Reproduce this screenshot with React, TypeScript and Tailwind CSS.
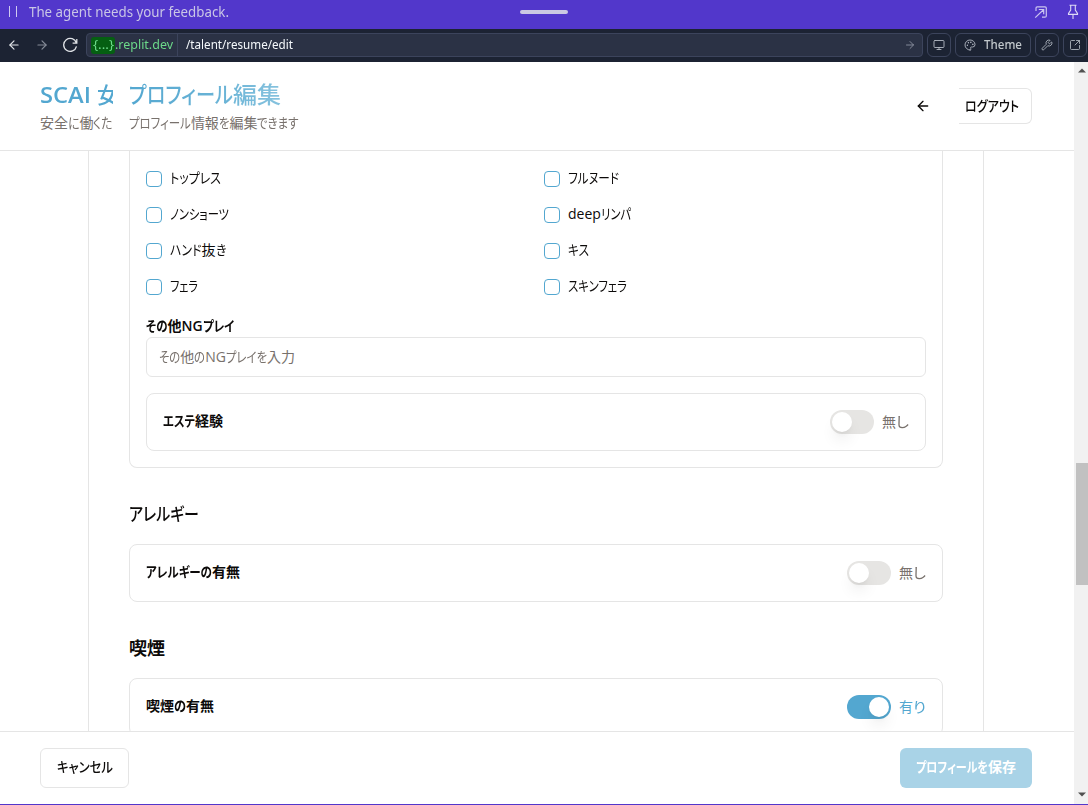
import React, { useLayoutEffect, useRef } from "react";
import { ArrowLeft, ArrowRight, Monitor, Palette, Wrench, SquareArrowOutUpRight } from "lucide-react";

const KANA = /[\u3040-\u30ff]+|[^\u3040-\u30ff]+/g;
const isKana = (s: string) => /[\u3040-\u30ff]/.test(s);

/** Sets a text in a given width by condensing its kana (or all of it, when it has none). */
function Fit({ text, w, className = "", leaf = "" }: { text: string; w: number; className?: string; leaf?: string }) {
  const ref = useRef<HTMLSpanElement>(null);
  const runs = text.match(KANA) ?? [];
  const hasKana = isKana(text);
  useLayoutEffect(() => {
    const root = ref.current;
    if (!root) return;
    const spans = Array.from(root.children) as HTMLElement[];
    let fixed = 0;
    let flexible = 0;
    spans.forEach((s) => {
      const n = (s.firstElementChild as HTMLElement).getBoundingClientRect().width;
      s.dataset.n = String(n);
      if (s.dataset.flex === "1") flexible += n;
      else fixed += n;
    });
    const k = (w - fixed) / flexible;
    spans.forEach((s) => {
      if (s.dataset.flex !== "1") return;
      s.style.width = Number(s.dataset.n) * k + "px";
      (s.firstElementChild as HTMLElement).style.transform = `scaleX(${k})`;
    });
  }, [text, w]);
  return (
    <span ref={ref} className={"inline-flex whitespace-pre " + className}>
      {runs.map((r, i) => (
        <span key={i} data-flex={!hasKana || isKana(r) ? "1" : "0"} className="inline-block shrink-0">
          <span className={"inline-block origin-left [font-feature-settings:'palt'] " + leaf}>{r}</span>
        </span>
      ))}
    </span>
  );
}

const left: [string, number][] = [["トップレス", 51], ["ノンショーツ", 59], ["ハンド抜き", 56], ["フェラ", 28]];
const right: [string, number][] = [["フルヌード", 51], ["deepリンパ", 63], ["キス", 21], ["スキンフェラ", 59]];

function Column({ items }: { items: [string, number][] }) {
  return (
    <div className="flex flex-col gap-4">
      {items.map(([t, w]) => (
        <div key={t} className="flex h-5 items-center gap-2">
          <span className="size-4 rounded-[4px] border border-[#53a7d0]" />
          <Fit text={t} w={w} className="pb-0.5 text-sm leading-5" />
        </div>
      ))}
    </div>
  );
}

function ToggleRow({ label, w, on = false }: { label: string; w: number; on?: boolean }) {
  return (
    <div className="flex h-[58px] items-center justify-between rounded-lg border border-[#e5e5e5] px-4">
      <Fit text={label} w={w} className="pb-0.5 text-sm font-semibold leading-5" />
      <div className="flex items-center gap-2">
        <span className={"flex h-6 w-11 items-center rounded-full p-0.5 " + (on ? "justify-end bg-[#53a7d0]" : "bg-[#e6e5e3]")}>
          <span className="size-5 rounded-full bg-white shadow-lg" />
        </span>
        <Fit text={on ? "有り" : "無し"} w={27} className={"text-sm leading-5 " + (on ? "text-[#53a7d0]" : "text-[#78716c]")} />
      </div>
    </div>
  );
}

function Browser() {
  return (
    <>
      <div className="flex h-[29px] shrink-0 items-center bg-[#5237cb] pb-1.5 text-[#c9c6e6]">
        <div className="ml-[9px] flex h-[11px] w-2 justify-between">
          <span className="w-px bg-[#d0caf0]" />
          <span className="w-px bg-[#d0caf0]" />
        </div>
        <Fit text="The agent needs your feedback." w={200} className="ml-3 font-['Noto_Sans',sans-serif] text-[13.5px] leading-5" />
        <span className="ml-[291px] h-1 w-12 rounded-full bg-[#cbc8e3]" />
        <svg className="ml-[466px] size-[14px]" viewBox="0 0 14 14" fill="none" stroke="#cbc5f0" strokeWidth="1.2">
          <path d="M2 6V3Q2 1.8 3.2 1.8H11Q12.3 1.8 12.3 3V11Q12.3 12.2 11 12.2H8M1.2 12.6L9.5 4.7M4.8 4.5H9.7V9.2" />
        </svg>
        <svg className="ml-[19px] h-4 w-3" viewBox="0 0 12 16" fill="none" stroke="#dedaf5" strokeWidth="1.1">
          <path d="M2.5 1.2H9.5M3.7 1.2V6L1.5 9.5V10.4H10.5V9.5L8.3 6V1.2M6 10.4V15" />
        </svg>
      </div>
      <div className="flex h-[33px] shrink-0 items-center overflow-hidden bg-[#1c2333] pb-px text-[#b4bac4]">
        <ArrowLeft className="ml-[7px] size-[14px] shrink-0 text-[#e1e4e8]" strokeWidth={2} />
        <ArrowRight className="ml-[14px] size-[14px] shrink-0 text-[#858b98]" strokeWidth={2} />
        <svg className="ml-[13px] size-4 shrink-0" viewBox="0 0 16 16" fill="none" stroke="#dfe2e6" strokeWidth="1.3">
          <path d="M14.8 2V6.2H10.6M14.4 6A6.5 6.5 0 1 0 14.5 9.4" />
        </svg>
        <div className="ml-2 flex h-6 w-[837px] shrink-0 items-center rounded-[4px] border border-[#3c445c] bg-[#2b3245] font-['Noto_Sans',sans-serif] text-[12.5px] leading-4">
          <span className="ml-1 flex h-[17px] w-6 items-center justify-center rounded-[3px] bg-[#055f12] text-[#6cd98a]">
            <Fit text="{...}" w={21} className="pb-px" />
          </span>
          <Fit text=".replit.dev" w={58} className="pb-px text-[#6cd98a]" />
          <span className="ml-1 h-[22px] w-px bg-[#3c445c]" />
          <Fit text="/talent/resume/edit" w={107} className="ml-2 pb-px text-[#f5f9fc]" />
          <ArrowRight className="mr-1.5 ml-auto size-3 text-[#8d93a1]" strokeWidth={1.8} />
        </div>
        <span className="ml-1 flex h-6 w-6 shrink-0 items-center justify-center rounded-md border border-[#3c445c]">
          <Monitor className="size-3" strokeWidth={1.8} />
        </span>
        <span className="ml-1 flex h-6 w-[76px] shrink-0 items-center rounded-md border border-[#3c445c] pl-2">
          <Palette className="size-3" strokeWidth={1.8} />
          <Fit text="Theme" w={38} className="ml-2 pb-px font-['Noto_Sans',sans-serif] text-[12.5px] font-medium leading-4 text-[#c2c8cc]" />
        </span>
        <span className="ml-1 flex h-6 w-6 shrink-0 items-center justify-center rounded-md border border-[#3c445c]">
          <Wrench className="size-3" strokeWidth={1.7} />
        </span>
        <span className="ml-1 flex h-6 w-6 shrink-0 items-center justify-center rounded-md border border-[#3c445c]">
          <SquareArrowOutUpRight className="size-3" strokeWidth={1.7} />
        </span>
      </div>
    </>
  );
}

export default function App() {
  return (
    <div className="flex h-[805px] w-[1088px] flex-col overflow-hidden bg-white font-['Open_Sans','Noto_Sans_CJK_JP',sans-serif] text-[#0c0a09]">
      <Browser />
      <div className="flex h-[742px] shrink-0">
        <div className="flex w-[1074px] flex-col">
          <header className="flex h-[89px] shrink-0 items-start border-b border-[#e5e5e5] pl-10">
            <div className="mt-4 w-[73px] overflow-hidden text-[#53a7d0]">
              <div className="flex h-8 items-center gap-1.5 text-[22px] leading-8">
                <Fit text="SCAI" w={51} className="font-semibold" />
                <Fit text="女" w={21} className="shrink-0 font-medium" />
              </div>
              <Fit text="安全に働くた" w={73} className="h-5 text-sm leading-5 text-[#78716c]" />
            </div>
            <div className="mt-4 ml-4">
              <div className="flex h-8 items-center text-[23px] font-medium leading-8">
                <Fit text="プロフィール" w={104} leaf="bg-linear-to-r from-[#53a7d0] to-[#6db5d7] bg-clip-text text-transparent" />
                <Fit text="編集" w={48} leaf="bg-linear-to-r from-[#70b7d8] to-[#86c2de] bg-clip-text text-transparent" />
              </div>
              <Fit text="プロフィール情報を編集できます" w={170} className="h-5 text-sm leading-5 text-[#78716c]" />
            </div>
            <ArrowLeft className="mt-9 ml-[616px] size-4" strokeWidth={2} />
            <div className="mt-[26px] ml-7 flex h-9 w-[73px] items-center rounded-r-md border border-l-0 border-[#e5e5e5] pl-1.5">
              <Fit text="ログアウト" w={54} className="text-sm font-medium leading-5" />
            </div>
          </header>

          <main className="h-[580px] shrink-0 overflow-hidden pl-[88px]">
            <div className="h-[640px] w-[896px] border-x border-[#e5e5e5] px-10">
              <section className="h-[317px] rounded-b-lg border border-t-0 border-[#e5e5e5] px-4 pt-[18px]">
                <div className="grid grid-cols-2 gap-x-4">
                  <Column items={left} />
                  <Column items={right} />
                </div>
                <div className="mt-[18px] mb-px flex h-[21px] items-center">
                  <Fit text="その他NGプレイ" w={88} className="text-sm font-semibold leading-5" />
                </div>
                <div className="flex h-10 items-center rounded-md border border-[#e5e5e5] px-3">
                  <Fit text="その他のNGプレイを入力" w={136} className="text-sm leading-5 text-[#78716c]" />
                </div>
                <div className="mt-4">
                  <ToggleRow label="エステ経験" w={60} />
                </div>
              </section>
              <section className="mt-8">
                <h3 className="flex h-7 items-center">
                  <Fit text="アレルギー" w={70} className="text-lg font-medium leading-7" />
                </h3>
                <div className="mt-4">
                  <ToggleRow label="アレルギーの有無" w={94} />
                </div>
              </section>
              <section className="mt-8">
                <h3 className="flex h-7 items-center">
                  <Fit text="喫煙" w={36} className="text-lg font-semibold leading-7" />
                </h3>
                <div className="mt-4">
                  <ToggleRow label="喫煙の有無" w={68} on />
                </div>
              </section>
            </div>
          </main>

          <footer className="flex h-[73px] shrink-0 items-start justify-between border-t border-[#e5e5e5] pt-4 pr-[42px] pl-10">
            <button className="flex h-10 w-[89px] items-center justify-center rounded-md border border-[#e5e5e5]">
              <Fit text="キャンセル" w={56} className="pb-0.5 text-sm font-medium leading-5" />
            </button>
            <button className="flex h-10 w-[132px] items-center justify-center rounded-md bg-[#a9d3e7] text-white">
              <Fit text="プロフィールを保存" w={100} className="pb-0.5 text-sm font-semibold leading-5" />
            </button>
          </footer>
        </div>
        <div className="flex w-[14px] flex-col items-end bg-[#f1f1f1]">
          <svg className="mt-1.5 mr-[2px] h-[5px] w-2" viewBox="0 0 8 5" fill="#505050">
            <path d="M0 4.5L4 .5L8 4.5Z" />
          </svg>
          <span className="mt-[390px] h-[122px] w-3 bg-[#c1c1c1]" />
          <svg className="mt-auto mr-[2px] mb-[7px] h-[5px] w-2" viewBox="0 0 8 5" fill="#505050">
            <path d="M0 .5H8L4 4.5Z" />
          </svg>
        </div>
      </div>
      <div className="h-px shrink-0 bg-[#5237cb]" />
    </div>
  );
}
